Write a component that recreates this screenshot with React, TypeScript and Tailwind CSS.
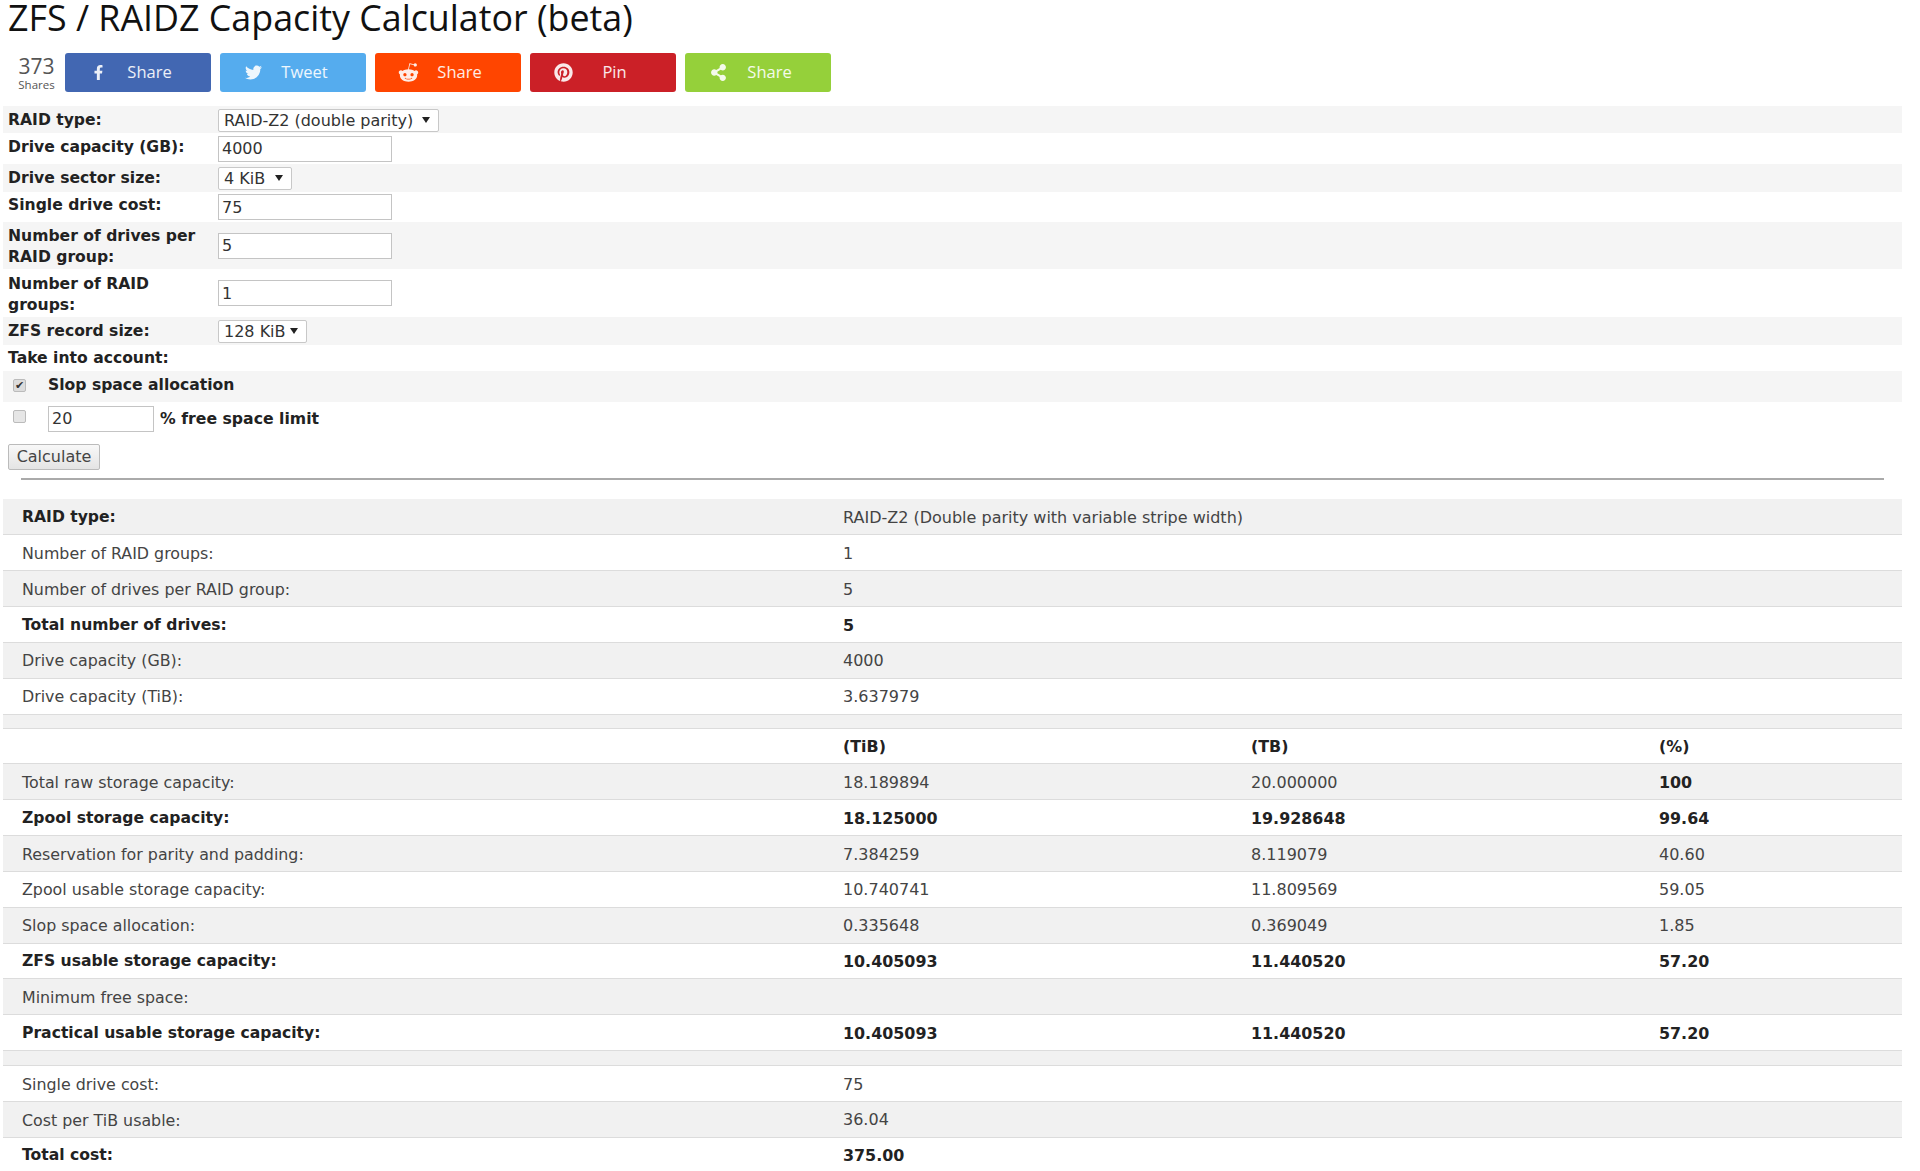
import { FaFacebookF, FaTwitter, FaRedditAlien, FaPinterest, FaShareAlt } from "react-icons/fa";
import type { ComponentType, ReactNode } from "react";

const shareButtons: { label: string; Icon: ComponentType<{ className?: string }>; color: string; size: string }[] = [
  { label: "Share", Icon: FaFacebookF, color: "bg-[#4267b2]", size: "h-[15px] w-[15px]" },
  { label: "Tweet", Icon: FaTwitter, color: "bg-[#55acee]", size: "h-[17px] w-[17px]" },
  { label: "Share", Icon: FaRedditAlien, color: "bg-[#ff4500]", size: "h-[21px] w-[21px]" },
  { label: "Pin", Icon: FaPinterest, color: "bg-[#cb2027]", size: "h-[19px] w-[19px]" },
  { label: "Share", Icon: FaShareAlt, color: "bg-[#95d03a]", size: "h-[17px] w-[17px]" },
];

function Select({ value, className }: { value: string; className: string }) {
  return (
    <span className={`relative inline-block h-[23px] rounded-[2px] border border-[#c8c8c8] bg-white pl-[5px] text-[16px] leading-[22px] text-[#333] ${className}`}>
      {value}
      <span className="absolute top-[7px] right-[8px] h-0 w-0 border-x-[4px] border-t-[6px] border-x-transparent border-t-[#222]" />
    </span>
  );
}

function TextInput({ value, className = "w-[174px]" }: { value: string; className?: string }) {
  return (
    <input
      readOnly
      value={value}
      className={`h-[26px] border border-[#c4c4c4] bg-white pl-[3px] text-[16px] font-normal text-[#333] outline-none ${className}`}
    />
  );
}

function FormRow({ label, gray, h, labelClass = "pt-[1px]", children }: { label: ReactNode; gray?: boolean; h: string; labelClass?: string; children?: ReactNode }) {
  return (
    <div className={`flex items-center pl-[5px] ${h} ${gray ? "bg-[#f5f5f5]" : ""}`}>
      <div className={`w-[210px] text-[15.6px] leading-[21px] font-bold text-[#222] ${labelClass}`}>{label}</div>
      {children}
    </div>
  );
}

type Row = { cells: string[]; bold?: boolean };

const topRows: Row[] = [
  { cells: ["RAID type:", "RAID-Z2 (Double parity with variable stripe width)"] },
  { cells: ["Number of RAID groups:", "1"] },
  { cells: ["Number of drives per RAID group:", "5"] },
  { cells: ["Total number of drives:", "5"], bold: true },
  { cells: ["Drive capacity (GB):", "4000"] },
  { cells: ["Drive capacity (TiB):", "3.637979"] },
];

const capacityRows: Row[] = [
  { cells: ["", "(TiB)", "(TB)", "(%)"], bold: true },
  { cells: ["Total raw storage capacity:", "18.189894", "20.000000", "100"] },
  { cells: ["Zpool storage capacity:", "18.125000", "19.928648", "99.64"], bold: true },
  { cells: ["Reservation for parity and padding:", "7.384259", "8.119079", "40.60"] },
  { cells: ["Zpool usable storage capacity:", "10.740741", "11.809569", "59.05"] },
  { cells: ["Slop space allocation:", "0.335648", "0.369049", "1.85"] },
  { cells: ["ZFS usable storage capacity:", "10.405093", "11.440520", "57.20"], bold: true },
  { cells: ["Minimum free space:", "", "", ""] },
  { cells: ["Practical usable storage capacity:", "10.405093", "11.440520", "57.20"], bold: true },
];

const costRows: Row[] = [
  { cells: ["Single drive cost:", "75"] },
  { cells: ["Cost per TiB usable:", "36.04"] },
  { cells: ["Total cost:", "375.00"], bold: true },
];

function ResultRows({ rows, firstGray }: { rows: Row[]; firstGray: boolean }) {
  return (
    <>
      {rows.map((row, i) => {
        const gray = i % 2 === 0 ? firstGray : !firstGray;
        const isTotalCost = row.cells[0] === "Total cost:";
        return (
          <tr key={row.cells[0] + i} className={`h-[35.85px] border-b border-[#dcdcdc] last:border-b-0 ${gray ? "bg-[#f1f1f1]" : ""}`}>
            {[0, 1, 2, 3].map((c) => {
              const isRaidLabel = row.cells[0] === "RAID type:" && c === 0;
              // the % column is bold on the 100 row in the original page
              const bold = row.bold || isRaidLabel || row.cells[c] === "100";
              const size = bold ? (c === 0 ? "text-[15.6px]" : "text-[15.9px]") : c === 0 ? "text-[15.85px]" : "text-[16px]";
              return (
                <td key={c} className={`p-0 ${isTotalCost ? "pt-0" : "pt-[2px]"} ${c === 0 ? "pl-[19px]" : ""} ${size} ${bold ? "font-bold text-[#222]" : "text-[#444]"}`}>
                  {row.cells[c] ?? ""}
                </td>
              );
            })}
          </tr>
        );
      })}
    </>
  );
}

function Spacer({ h }: { h: string }) {
  return (
    <tr className={`${h} border-y border-[#dcdcdc] bg-[#f1f1f1]`}>
      <td colSpan={4} className="p-0" />
    </tr>
  );
}

export default function App() {
  return (
    <div className="h-[1171px] overflow-hidden bg-white pr-[18px] pl-[3px] font-['DejaVu_Sans',sans-serif]">
      <h1 className="pl-[5px] font-['Open_Sans',sans-serif] text-[35.8px] leading-[35px] text-[#111]">
        ZFS / RAIDZ Capacity Calculator (beta)
      </h1>

      <div className="mt-[18px] flex items-center pl-[12px]">
        <div className="mr-[7px] w-[43px] text-center font-['Open_Sans',sans-serif] text-[#555]">
          <div className="text-[21px] leading-[24px]">373</div>
          <div className="text-[11.5px] leading-[13px]">Shares</div>
        </div>
        <div className="flex gap-[9px]">
          {shareButtons.map(({ label, Icon, color, size }, i) => (
            <div key={i} className={`flex h-[39px] w-[146px] items-center rounded-[3px] text-[16.5px] text-white/90 ${color}`}>
              <span className="flex w-[66px] justify-center"><Icon className={size} /></span>
              <span className="flex w-[37px] justify-center whitespace-nowrap font-['Open_Sans',sans-serif]">{label}</span>
            </div>
          ))}
        </div>
      </div>

      <div className="mt-[14px]">
        <FormRow label="RAID type:" gray h="h-[27px]"><Select value="RAID-Z2 (double parity)" className="top-[1px] w-[221px]" /></FormRow>
        <FormRow label="Drive capacity (GB):" h="h-[31px]" labelClass="pb-[3px]"><TextInput value="4000" /></FormRow>
        <FormRow label="Drive sector size:" gray h="h-[28px]"><Select value="4 KiB" className="w-[74px]" /></FormRow>
        <FormRow label="Single drive cost:" h="h-[30px]" labelClass="pb-[3px]"><TextInput value="75" /></FormRow>
        <FormRow label={<>Number of drives per<br />RAID group:</>} gray h="h-[47px]" labelClass="pt-[3px]"><TextInput value="5" /></FormRow>
        <FormRow label={<>Number of RAID<br />groups:</>} h="h-[48px]" labelClass="pt-[3px]"><TextInput value="1" /></FormRow>
        <FormRow label="ZFS record size:" gray h="h-[28px]"><Select value="128 KiB" className="w-[89px]" /></FormRow>
        <FormRow label="Take into account:" h="h-[26px]" />
        <div className="flex h-[31px] items-center bg-[#f5f5f5] pl-[10px] text-[15.6px] font-bold text-[#222]">
          <span className="mr-[22px] flex h-[13px] w-[13px] -translate-y-[1px] items-center justify-center rounded-[2px] border border-[#bbb] bg-[#dcdcdc] text-[11px] leading-none text-[#333]">✔</span>
          <span className="-translate-y-[1px]">Slop space allocation</span>
        </div>
        <div className="flex h-[33px] items-center pl-[10px] text-[15.7px] font-bold text-[#222]">
          <span className="mr-[22px] h-[13px] w-[13px] -translate-y-[2px] rounded-[2px] border border-[#bbb] bg-[#e6e6e6]" />
          <TextInput value="20" className="w-[106px]" />
          <span className="ml-[6px]">% free space limit</span>
        </div>
      </div>

      <button className="mt-[9px] ml-[5px] block h-[26px] w-[92px] rounded-[2px] border border-[#bbb] bg-gradient-to-b from-[#f8f8f8] to-[#e4e4e4] text-[16px] text-[#444]">
        Calculate
      </button>

      <hr className="mt-[8px] mr-[18px] ml-[18px] border-t-2 border-[#aaa]" />

      <table className="mt-[19px] w-full table-fixed border-collapse">
        <colgroup>
          <col className="w-[840px]" />
          <col className="w-[408px]" />
          <col className="w-[408px]" />
          <col />
        </colgroup>
        <tbody>
          <ResultRows rows={topRows} firstGray />
          <Spacer h="h-[14px]" />
          <ResultRows rows={capacityRows} firstGray={false} />
          <Spacer h="h-[15px]" />
          <ResultRows rows={costRows} firstGray={false} />
        </tbody>
      </table>
    </div>
  );
}
